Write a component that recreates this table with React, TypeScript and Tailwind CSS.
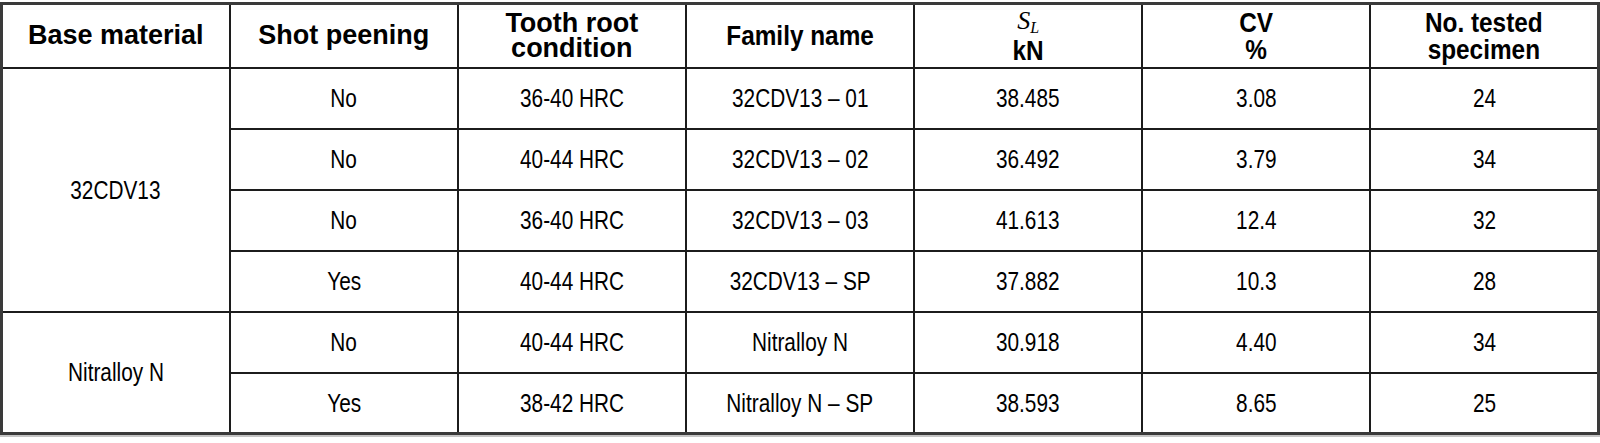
const rows = [
  { shot: "No", tooth: "36-40 HRC", family: "32CDV13 – 01", sl: "38.485", cv: "3.08", n: "24" },
  { shot: "No", tooth: "40-44 HRC", family: "32CDV13 – 02", sl: "36.492", cv: "3.79", n: "34" },
  { shot: "No", tooth: "36-40 HRC", family: "32CDV13 – 03", sl: "41.613", cv: "12.4", n: "32" },
  { shot: "Yes", tooth: "40-44 HRC", family: "32CDV13 – SP", sl: "37.882", cv: "10.3", n: "28" },
  { shot: "No", tooth: "40-44 HRC", family: "Nitralloy N", sl: "30.918", cv: "4.40", n: "34" },
  { shot: "Yes", tooth: "38-42 HRC", family: "Nitralloy N – SP", sl: "38.593", cv: "8.65", n: "25" },
]

const cell = "border-2 border-[#1c1c1c] text-center align-middle text-black p-0"
const th = `${cell} font-bold text-[27px] leading-[25px]`
const td = `${cell} text-[26px] leading-none`

// condensed look: no narrow face is installed, so squeeze Liberation Sans
function Narrow({ children }: { children: React.ReactNode }) {
  return <span className="inline-block scale-x-[0.8] whitespace-nowrap">{children}</span>
}

function NarrowHead({ children }: { children: React.ReactNode }) {
  return <div className="scale-x-[0.87] whitespace-nowrap text-[28px] leading-[27px]">{children}</div>
}

export default function App() {
  return (
    <div className="w-[1600px] h-[443px] bg-white pt-[2px] font-['Liberation_Sans',Arial,sans-serif]">
      <table className="w-full table-fixed border-collapse border-[3px] border-[#3a3a3a]">
        <thead>
          <tr className="h-[64px]">
            <th className={th}>Base material</th>
            <th className={th}>Shot peening</th>
            <th className={th}>
              <div>Tooth root</div>
              <div>condition</div>
            </th>
            <th className={th}>
              <NarrowHead>Family name</NarrowHead>
            </th>
            <th className={th}>
              <div className="font-['Liberation_Serif',serif] italic font-normal text-[26px] leading-[27px]">
                S<span className="text-[16px] relative top-[4px]">L</span>
              </div>
              <NarrowHead>kN</NarrowHead>
            </th>
            <th className={th}>
              <NarrowHead>CV</NarrowHead>
              <NarrowHead>%</NarrowHead>
            </th>
            <th className={th}>
              <NarrowHead>No. tested</NarrowHead>
              <NarrowHead>specimen</NarrowHead>
            </th>
          </tr>
        </thead>
        <tbody>
          {rows.map((r, i) => (
            <tr key={i} className="h-[61px]">
              {i === 0 && (
                <td rowSpan={4} className={td}>
                  <Narrow>32CDV13</Narrow>
                </td>
              )}
              {i === 4 && (
                <td rowSpan={2} className={td}>
                  <Narrow>Nitralloy N</Narrow>
                </td>
              )}
              <td className={td}>
                <Narrow>{r.shot}</Narrow>
              </td>
              <td className={td}>
                <Narrow>{r.tooth}</Narrow>
              </td>
              <td className={td}>
                <Narrow>{r.family}</Narrow>
              </td>
              <td className={td}>
                <Narrow>{r.sl}</Narrow>
              </td>
              <td className={td}>
                <Narrow>{r.cv}</Narrow>
              </td>
              <td className={td}>
                <Narrow>{r.n}</Narrow>
              </td>
            </tr>
          ))}
        </tbody>
      </table>
      <div className="h-[2px] bg-[#c4c4c4]" />
    </div>
  )
}
